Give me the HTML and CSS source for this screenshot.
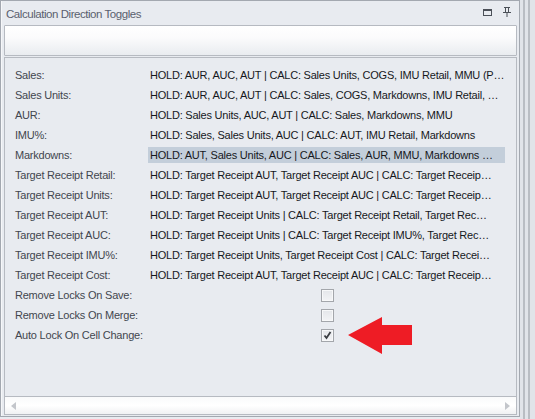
FILE: index.html
```html
<!DOCTYPE html>
<html>
<head>
<meta charset="utf-8">
<link rel="stylesheet" href="styles.css">
</head>
<body>
<div class="page">
  <div class="frame">
    <div class="titlebar">
      <span class="title">Calculation Direction Toggles</span>
      <span class="icons">
        <svg class="ico" width="10" height="8" viewBox="0 0 10 8"><rect x="0.5" y="0.5" width="8" height="6" fill="#e8ebf0" stroke="#4b5058"/><rect x="0" y="0" width="9" height="2" fill="#4b5058"/></svg>
        <svg class="ico pin" width="8" height="10" viewBox="0 0 8 10"><path d="M1 0.5H7M2.5 0.5V5.5M5.5 0.5V5.5M0 5.5H8M4 5.5V10" stroke="#4b5058" fill="none" stroke-width="1"/></svg>
      </span>
    </div>
    <div class="toolbar"></div>
    <div class="content">
      <div class="row"><span class="label">Sales:</span><span class="value">HOLD: AUR, AUC, AUT | CALC: Sales Units, COGS, IMU Retail, MMU (P…</span></div>
      <div class="row"><span class="label">Sales Units:</span><span class="value">HOLD: AUR, AUC, AUT | CALC: Sales, COGS, Markdowns, IMU Retail, …</span></div>
      <div class="row"><span class="label">AUR:</span><span class="value">HOLD: Sales Units, AUC, AUT | CALC: Sales, Markdowns, MMU</span></div>
      <div class="row"><span class="label">IMU%:</span><span class="value">HOLD: Sales, Sales Units, AUC | CALC: AUT, IMU Retail, Markdowns</span></div>
      <div class="row"><span class="label">Markdowns:</span><span class="value selected">HOLD: AUT, Sales Units, AUC | CALC: Sales, AUR, MMU, Markdowns …</span></div>
      <div class="row"><span class="label">Target Receipt Retail:</span><span class="value">HOLD: Target Receipt AUT, Target Receipt AUC | CALC: Target Receip…</span></div>
      <div class="row"><span class="label">Target Receipt Units:</span><span class="value">HOLD: Target Receipt AUT, Target Receipt AUC | CALC: Target Receip…</span></div>
      <div class="row"><span class="label">Target Receipt AUT:</span><span class="value">HOLD: Target Receipt Units | CALC: Target Receipt Retail, Target Rec…</span></div>
      <div class="row"><span class="label">Target Receipt AUC:</span><span class="value">HOLD: Target Receipt Units | CALC: Target Receipt IMU%, Target Rec…</span></div>
      <div class="row"><span class="label">Target Receipt IMU%:</span><span class="value">HOLD: Target Receipt Units, Target Receipt Cost | CALC: Target Recei…</span></div>
      <div class="row"><span class="label">Target Receipt Cost:</span><span class="value">HOLD: Target Receipt AUT, Target Receipt AUC | CALC: Target Receip…</span></div>
      <div class="row"><span class="label">Remove Locks On Save:</span><span class="value check-cell"><span class="check"></span></span></div>
      <div class="row"><span class="label">Remove Locks On Merge:</span><span class="value check-cell"><span class="check"></span></span></div>
      <div class="row"><span class="label">Auto Lock On Cell Change:</span><span class="value check-cell"><span class="check checked"><svg width="9" height="9" viewBox="0 0 9 9"><path d="M1.5 4.5L3.5 7L7.5 1" stroke="#3a3d42" stroke-width="1.8" fill="none"/></svg></span>
        <svg class="arrow" width="65" height="37" viewBox="0 0 65 37"><polygon points="0,18 34,0 34,8 64,8 64,28 34,28 34,37" fill="#ee1c25"/></svg></span></div>
    </div>
    <div class="hscroll">
      <span class="tri left"></span>
      <span class="tri right"></span>
    </div>
  </div>
  <div class="splitter">
    <span class="bar"></span>
    <span class="bar"></span>
  </div>
</div>
</body>
</html>
```

FILE: styles.css
```css
html, body {
  margin: 0;
  padding: 0;
  background: #e8ebf0;
}
body {
  font-family: "Liberation Sans", Arial, sans-serif;
  font-size: 11px;
  letter-spacing: -0.22px;
}
.page {
  display: flex;
  width: 535px;
  height: 419px;
}
.frame {
  border: 1px solid #a3a8b0;
  box-shadow: inset 1px 0 0 #f6f7f9;
  display: flex;
  flex-direction: column;
  padding: 0 2px 1px 3px;
  box-sizing: border-box;
  height: 417px;
  width: 520px;
}
.titlebar {
  height: 24px;
  display: flex;
  align-items: center;
  justify-content: space-between;
  padding: 0 6px 0 2px;
  flex: none;
}
.title {
  font-family: "Liberation Sans", Arial, sans-serif;
  font-size: 11.5px;
  letter-spacing: -0.45px;
  color: #5a5f6e;
  position: relative;
  top: 1px;
}
.icons {
  display: flex;
  align-items: center;
  gap: 10px;
}
.ico { display: block; }
.pin { position: relative; top: -1px; }
.toolbar {
  flex: none;
  height: 29px;
  border: 1px solid #b6bac1;
  border-radius: 1px;
  background: linear-gradient(#ffffff 0%, #fbfbfc 40%, #e9ecf0 100%);
  margin-bottom: 1px;
}
.content {
  flex: 1;
  border: 1px solid #b6bac1;
  background: #e8ebf0;
  padding: 7px 0 0 10px;
  display: flex;
  flex-direction: column;
}
.row {
  display: flex;
  align-items: center;
  height: 20px;
}
.label {
  width: 133px;
  flex: none;
  color: #42464e;
  white-space: nowrap;
}
.value {
  width: 357px;
  flex: none;
  box-sizing: border-box;
  padding-left: 2px;
  height: 16px;
  line-height: 16px;
  color: #16181c;
  white-space: nowrap;
  overflow: hidden;
}
.value.selected {
  background: #c3ceda;
}
.check-cell {
  display: flex;
  align-items: center;
  justify-content: center;
  position: relative;
  overflow: visible;
}
.check {
  width: 13px;
  height: 13px;
  box-sizing: border-box;
  border: 1px solid #a3a6ab;
  background: linear-gradient(#e4e6ea, #f3f4f6);
  box-shadow: inset 0 0 0 1px #f7f8f9;
  display: flex;
  align-items: center;
  justify-content: center;
}
.arrow {
  position: absolute;
  left: 200px;
  top: -10px;
}
.hscroll {
  flex: none;
  height: 17px;
  border: 1px solid #b6bac1;
  border-top: none;
  background: linear-gradient(#f9fafb, #ffffff 50%, #f0f1f3);
  display: flex;
  align-items: center;
  justify-content: space-between;
  padding: 0 6px 0 6px;
}
.tri {
  width: 0;
  height: 0;
  border-top: 4px solid transparent;
  border-bottom: 4px solid transparent;
}
.tri.left { border-right: 5px solid #c3c6cb; }
.tri.right { border-left: 5px solid #c3c6cb; }
.splitter {
  flex: 1;
  display: flex;
  gap: 3px;
  padding-left: 3px;
  background: #e1e4e9;
}
.bar {
  width: 2px;
  height: 100%;
  background: #b9bdc3;
}
```
